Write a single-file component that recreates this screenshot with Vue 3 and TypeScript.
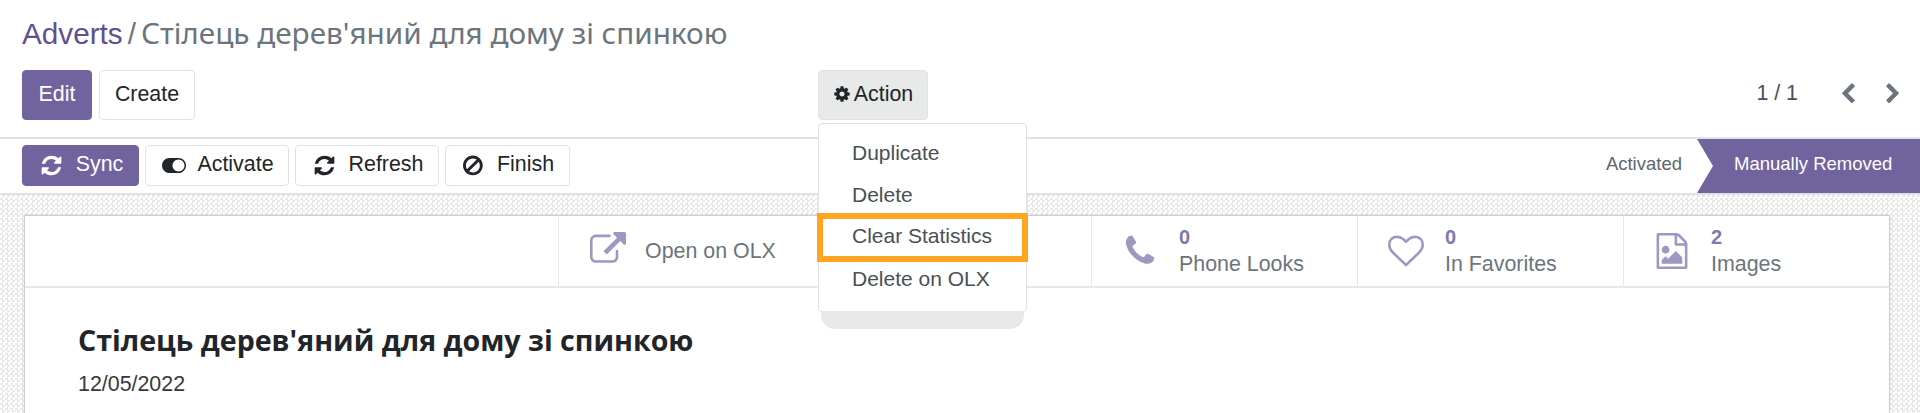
<script setup lang="ts">
const icons = {
  refresh: 'M1639 1056q0 5-1 7-64 268-268 434.5t-478 166.5q-146 0-282.5-55t-243.5-157l-129 129q-19 19-45 19t-45-19-19-45v-448q0-26 19-45t45-19h448q26 0 45 19t19 45-19 45l-137 137q71 66 161 102t187 36q134 0 250-65t186-179q11-17 53-117 8-23 30-23h192q13 0 22.5 9.5t9.5 22.5zm25-800v448q0 26-19 45t-45 19h-448q-26 0-45-19t-19-45 19-45l138-138q-148-137-349-137-134 0-250 65t-186 179q-11 17-53 117-8 23-30 23h-199q-13 0-22.5-9.5t-9.5-22.5v-7q65-268 270-434.5t480-166.5q146 0 284 55.5t245 156.5l130-129q19-19 45-19t45 19 19 45z',
  ban: 'M1312 893q0-161-87-295l-754 753q137 89 297 89 111 0 211.5-43.5t173.5-116.5 116-174.5 43-212.5zm-999 299l755-754q-135-91-300-91-148 0-273 73t-198 199-73 274q0 162 89 299zm1223-299q0 157-61 300t-163.5 246-245 164-298.5 61-298.5-61-245-164-163.5-246-61-300 61-299.5 163.5-245.5 245-164 298.5-61 298.5 61 245 164 163.5 245.5 61 299.5z',
  toggle: 'M0 896q0-130 51-248.5t136.5-204 204-136.5 248.5-51h768q130 0 248.5 51t204 136.5 136.5 204 51 248.5-51 248.5-136.5 204-204 136.5-248.5 51h-768q-130 0-248.5-51t-204-136.5-136.5-204-51-248.5zm1408 512q104 0 198.5-40.5t163.5-109.5 109.5-163.5 40.5-198.5-40.5-198.5-109.5-163.5-163.5-109.5-198.5-40.5-198.5 40.5-163.5 109.5-109.5 163.5-40.5 198.5 40.5 198.5 109.5 163.5 163.5 109.5 198.5 40.5z',
  cog: 'M1152 896q0-106-75-181t-181-75-181 75-75 181 75 181 181 75 181-75 75-181zm512-109v222q0 12-8 23t-20 13l-185 28q-19 54-39 91 35 50 107 138 10 12 10 25t-9 23q-27 37-99 108t-94 71q-12 0-26-9l-138-108q-44 23-91 38-16 136-29 186-7 28-36 28h-222q-14 0-24.5-8.5t-11.5-21.5l-28-184q-49-16-90-37l-141 107q-10 9-25 9-14 0-25-11-126-114-165-168-7-10-7-23 0-12 8-23 15-21 51-66.5t54-70.5q-27-50-41-99l-183-27q-13-2-21-12.5t-8-23.5v-222q0-12 8-23t19-13l186-28q14-46 39-92-40-57-107-138-10-12-10-24 0-10 9-23 26-36 98.5-107.5t94.5-71.5q13 0 26 10l138 107q44-23 91-38 16-136 29-186 7-28 36-28h222q14 0 24.5 8.5t11.5 21.5l28 184q49 16 90 37l142-107q9-9 24-9 13 0 25 10 129 119 165 170 7 8 7 22 0 12-8 23-15 21-51 66.5t-54 70.5q26 50 41 98l183 28q13 2 21 12.5t8 23.5z',
  external: 'M1408 928v320q0 119-84.5 203.5t-203.5 84.5h-832q-119 0-203.5-84.5t-84.5-203.5v-832q0-119 84.5-203.5t203.5-84.5h704q14 0 23 9t9 23v64q0 14-9 23t-23 9h-704q-66 0-113 47t-47 113v832q0 66 47 113t113 47h832q66 0 113-47t47-113v-320q0-14 9-23t23-9h64q14 0 23 9t9 23zm384-864v512q0 26-19 45t-45 19-45-19l-176-176-652 652q-10 10-23 10t-23-10l-114-114q-10-10-10-23t10-23l652-652-176-176q-19-19-19-45t19-45 45-19h512q26 0 45 19t19 45z',
  phone: 'M1600 1240q0 27-10 70.5t-21 68.5q-21 50-122 106-94 51-186 51-27 0-53-3.5t-57.5-12.5-47-14.5-55.5-20.5-49-18q-98-35-175-83-127-79-264-216t-216-264q-48-77-83-175-3-9-18-49t-20.5-55.5-14.5-47-12.5-57.5-3.5-53q0-92 51-186 56-101 106-122 25-11 68.5-21t70.5-10q14 0 21 3 18 6 53 76 11 19 30 54t35 63.5 31 53.5q3 4 17.5 25t21.5 35.5 7 28.5q0 20-28.5 50t-62 55-62 53-28.5 46q0 9 5 22.5t8.5 20.5 14 24 11.5 19q76 137 174 235t235 174q2 1 19 11.5t24 14 20.5 8.5 22.5 5q18 0 46-28.5t53-62 55-62 50-28.5q14 0 28.5 7t35.5 21.5 25 17.5q25 15 53.5 31t63.5 35 54 30q70 35 76 53 3 7 3 21z',
  heart: 'M1664 596q0-81-21.5-143t-55-98.5-81.5-59.5-94-31-98-8-112 25.5-110.5 64-86.5 72-60 61.5q-18 22-49 22t-49-22q-24-28-60-61.5t-86.5-72-110.5-64-112-25.5-98 8-94 31-81.5 59.5-55 98.5-21.5 143q0 168 187 355l581 560 580-559q188-188 188-356zm128 0q0 221-229 450l-623 600q-18 18-44 18t-44-18l-624-602q-10-8-27.5-26t-55.5-65.5-68-97.5-53.5-121-23.5-138q0-220 127-344t351-124q62 0 126.5 21.5t120 58 95.5 68.5 76 68q36-36 76-68t95.5-68.5 120-58 126.5-21.5q224 0 351 124t127 344z',
  image: 'M1596 380q28 28 48 76t20 88v1152q0 40-28 68t-68 28h-1344q-40 0-68-28t-28-68v-1600q0-40 28-68t68-28h896q40 0 88 20t76 48zm-444-244v376h376q-10-29-22-41l-313-313q-12-12-41-22zm384 1528v-1024h-416q-40 0-68-28t-28-68v-416h-768v1536h1280zm-128-448v320h-1024v-192l192-192 128 128 384-384zm-832-192q-80 0-136-56t-56-136 56-136 136-56 136 56 56 136-56 136-136 56z',
  left: 'M1427 301l-531 531 531 531q19 19 19 45t-19 45l-166 166q-19 19-45 19t-45-19l-742-742q-19-19-19-45t19-45l742-742q19-19 45-19t45 19l166 166q19 19 19 45t-19 45z',
  right: 'M1363 877l-742 742q-19 19-45 19t-45-19l-166-166q-19-19-19-45t19-45l531-531-531-531q-19-19-19-45t19-45l166-166q19-19 45-19t45 19l742 742q19 19 19 45t-19 45z',
}
const stats = [
  { icon: icons.phone, value: '0', label: 'Phone Looks' },
  { icon: icons.heart, value: '0', label: 'In Favorites' },
  { icon: icons.image, value: '2', label: 'Images' },
]
const menu = ['Duplicate', 'Delete', 'Clear Statistics', 'Delete on OLX']
</script>

<template>
  <div class="page">
    <header class="head">
      <div class="crumbs">
        <a class="crumb-link">Adverts</a><span class="slash">/</span><span class="crumb-cur">Стілець дерев'яний для дому зі спинкою</span>
      </div>
      <div class="controls">
        <div class="left-btns">
          <button class="btn primary edit">Edit</button>
          <button class="btn plain create">Create</button>
        </div>
        <div class="action-wrap">
          <button class="btn action">
            <svg class="cog" viewBox="0 0 1792 1792"><path :d="icons.cog" /></svg>Action
          </button>
          <div class="menu">
            <div v-for="m in menu" :key="m" class="menu-item" :class="{ hl: m === 'Clear Statistics' }">{{ m }}</div>
          </div>
        </div>
        <div class="pager">
          <span class="count">1 / 1</span>
          <svg class="chev" viewBox="0 0 1792 1792"><path :d="icons.left" /></svg>
          <svg class="chev" viewBox="0 0 1792 1792"><path :d="icons.right" /></svg>
        </div>
      </div>
    </header>

    <div class="statusbar">
      <div class="status-btns">
        <button class="sbtn primary sync">
          <svg viewBox="0 0 1792 1792"><path :d="icons.refresh" /></svg>Sync
        </button>
        <button class="sbtn plain activate">
          <svg class="tog" viewBox="0 0 2048 1792"><path :d="icons.toggle" /></svg>Activate
        </button>
        <button class="sbtn plain refresh">
          <svg viewBox="0 0 1792 1792"><path :d="icons.refresh" /></svg>Refresh
        </button>
        <button class="sbtn plain finish">
          <svg viewBox="0 0 1792 1792"><path :d="icons.ban" /></svg>Finish
        </button>
      </div>
      <div class="stages">
        <span class="stage-off">Activated</span>
        <span class="stage-on">Manually Removed</span>
      </div>
    </div>

    <main class="sheet-bg">
      <section class="sheet">
        <div class="boxes">
          <div class="box open">
            <svg class="box-icon" viewBox="0 0 1792 1792"><path :d="icons.external" /></svg>
            <span class="box-text">Open on OLX</span>
          </div>
          <div class="box hidden-box"></div>
          <div v-for="s in stats" :key="s.label" class="box">
            <svg class="box-icon stat-icon" viewBox="0 0 1792 1792"><path :d="s.icon" /></svg>
            <div class="box-info">
              <b>{{ s.value }}</b>
              <span>{{ s.label }}</span>
            </div>
          </div>
        </div>
        <div class="content">
          <h1>Стілець дерев'яний для дому зі спинкою</h1>
          <p>12/05/2022</p>
        </div>
      </section>
    </main>
  </div>
</template>

<style>
html, body { margin: 0; padding: 0; background: #fff; overflow: hidden; }
</style>

<style scoped>
.page {
  width: 1920px;
  height: 413px;
  overflow: hidden;
  display: flex;
  flex-direction: column;
  background: #fff;
  font-family: "Liberation Sans", Arial, sans-serif;
  color: #212529;
}
button { font-family: inherit; cursor: pointer; }
svg { fill: currentColor; display: block; flex: none; }

.head {
  height: 137px;
  padding: 0 22px;
  border-bottom: 2px solid #dee2e6;
  flex: none;
}
.crumbs {
  height: 70px;
  box-sizing: border-box;
  padding-top: 15px;
  font-size: 29.7px;
  line-height: 36px;
  white-space: nowrap;
}
.crumb-link { color: #5f4f90; }
.slash { color: #6c757d; margin: 0 5px; }
.crumb-cur { color: #6c757d; font-family: "Noto Sans", sans-serif; }

.controls { display: flex; position: relative; }
.left-btns { display: flex; gap: 7px; width: 796px; }
.btn {
  height: 50px;
  border-radius: 4px;
  font-size: 21.4px;
  padding: 0 0 2px;
  box-sizing: border-box;
}
.primary { background: #71639e; border: 1px solid #71639e; color: #fff; }
.plain { background: #fff; border: 1px solid #dee2e6; color: #212529; }
.edit { width: 70px; }
.create { width: 96px; }
.action-wrap { position: relative; }
.action {
  width: 110px;
  background: #e8e9e9;
  border: 1px solid #dee2e6;
  color: #212529;
  display: flex;
  align-items: center;
  justify-content: center;
  gap: 3px;
}
.cog { width: 18px; height: 18px; }
.menu {
  position: absolute;
  z-index: 5;
  top: 53px;
  left: 0;
  width: 209px;
  height: 189px;
  box-sizing: border-box;
  padding-top: 8px;
  background: #fff;
  border: 1px solid #dee2e6;
  border-radius: 4px;
}
.menu::after {
  content: "";
  position: absolute;
  z-index: -1;
  left: 2px;
  right: 2px;
  bottom: -18px;
  height: 18px;
  background: #e7e9e9;
  border-radius: 0 0 14px 14px;
}
.menu-item {
  height: 42px;
  line-height: 42px;
  padding-left: 33px;
  font-size: 21px;
  color: #495057;
  box-sizing: border-box;
}
.hl {
  outline: 6px solid #ffa520;
  outline-offset: -6px;
  margin: -3px -2px -4px;
  width: 211px;
  height: 49px;
  line-height: 46px;
  padding-left: 35px;
}
.pager {
  margin-left: auto;
  display: flex;
  align-items: center;
  height: 46px;
  color: #495057;
  font-size: 21.4px;
}
.count { margin-right: 39px; color: #495057; }
.chev { width: 22px; height: 22px; color: #6c757d; margin-top: 2px; }
.chev + .chev { margin-left: 23px; margin-right: -6px; }

.statusbar {
  height: 56px;
  flex: none;
  display: flex;
  justify-content: space-between;
  box-sizing: border-box;
  padding-left: 22px;
  border-bottom: 2px solid #dee2e6;
}
.status-btns { display: flex; gap: 6px; padding-top: 6px; }
.sbtn {
  height: 41px;
  border-radius: 4px;
  font-size: 21.4px;
  padding: 0 0 3px 2px;
  box-sizing: border-box;
  display: flex;
  align-items: center;
  justify-content: center;
  gap: 13px;
}
.sbtn svg { width: 23px; height: 23px; margin-top: 3px; }
.sbtn .tog { width: 24px; }
.activate { gap: 11px; }
.finish { gap: 11px; }
.sync { width: 117px; }
.activate { width: 144px; }
.refresh { width: 144px; }
.finish { width: 125px; }
.stages { display: flex; align-items: stretch; height: 54px; font-size: 18.5px; }
.stage-off { color: #5c6670; align-self: center; margin: 0 15px 4px 0; }
.stage-on {
  width: 223px;
  box-sizing: border-box;
  background: #71639e;
  color: #fff;
  display: flex;
  align-items: center;
  padding: 0 0 4px 37px;
  clip-path: polygon(0 0, 100% 0, 100% 100%, 0 100%, 16px 50%);
}

.sheet-bg {
  flex: 1;
  padding: 20px 30px 0 24px;
  background-color: #fff;
  background-image: conic-gradient(#e8eaea 25%, #fff 0 50%, #e8eaea 0 75%, #fff 0);
  background-size: 5px 5px;
  min-height: 0;
}
.sheet {
  height: 100%;
  background: #fff;
  border: 1px solid #c8ccd6;
  border-bottom: 0;
  box-sizing: border-box;
  box-shadow: 0 0 2px rgba(0,0,0,.15);
}
.boxes {
  height: 70px;
  display: flex;
  justify-content: flex-end;
  border-bottom: 2px solid #e6e8ea;
}
.box {
  width: 266px;
  flex: none;
  border-left: 1px solid #e6e8ea;
  box-sizing: border-box;
  display: flex;
  align-items: center;
  padding-left: 30px;
  color: #6c757d;
  font-size: 21.4px;
}
.open { width: 267px; padding-left: 31px; }
.box-icon { width: 36px; height: 36px; color: #9d97c1; margin-top: -2px; }
.box-text { margin-left: 19px; }
.box-info { display: flex; flex-direction: column; margin-left: 21px; line-height: 27px; }
.box-info b { color: #8077ad; font-size: 20px; }
.stat-icon { margin-top: 0; }
.content { padding: 33px 0 0 53px; }
h1 {
  margin: 0;
  font-family: "Open Sans", sans-serif;
  font-weight: 700;
  font-size: 28.6px;
  line-height: 38px;
  color: #212529;
}
p { margin: 13px 0 0; font-size: 21.4px; line-height: 24px; color: #343a40; }
</style>
